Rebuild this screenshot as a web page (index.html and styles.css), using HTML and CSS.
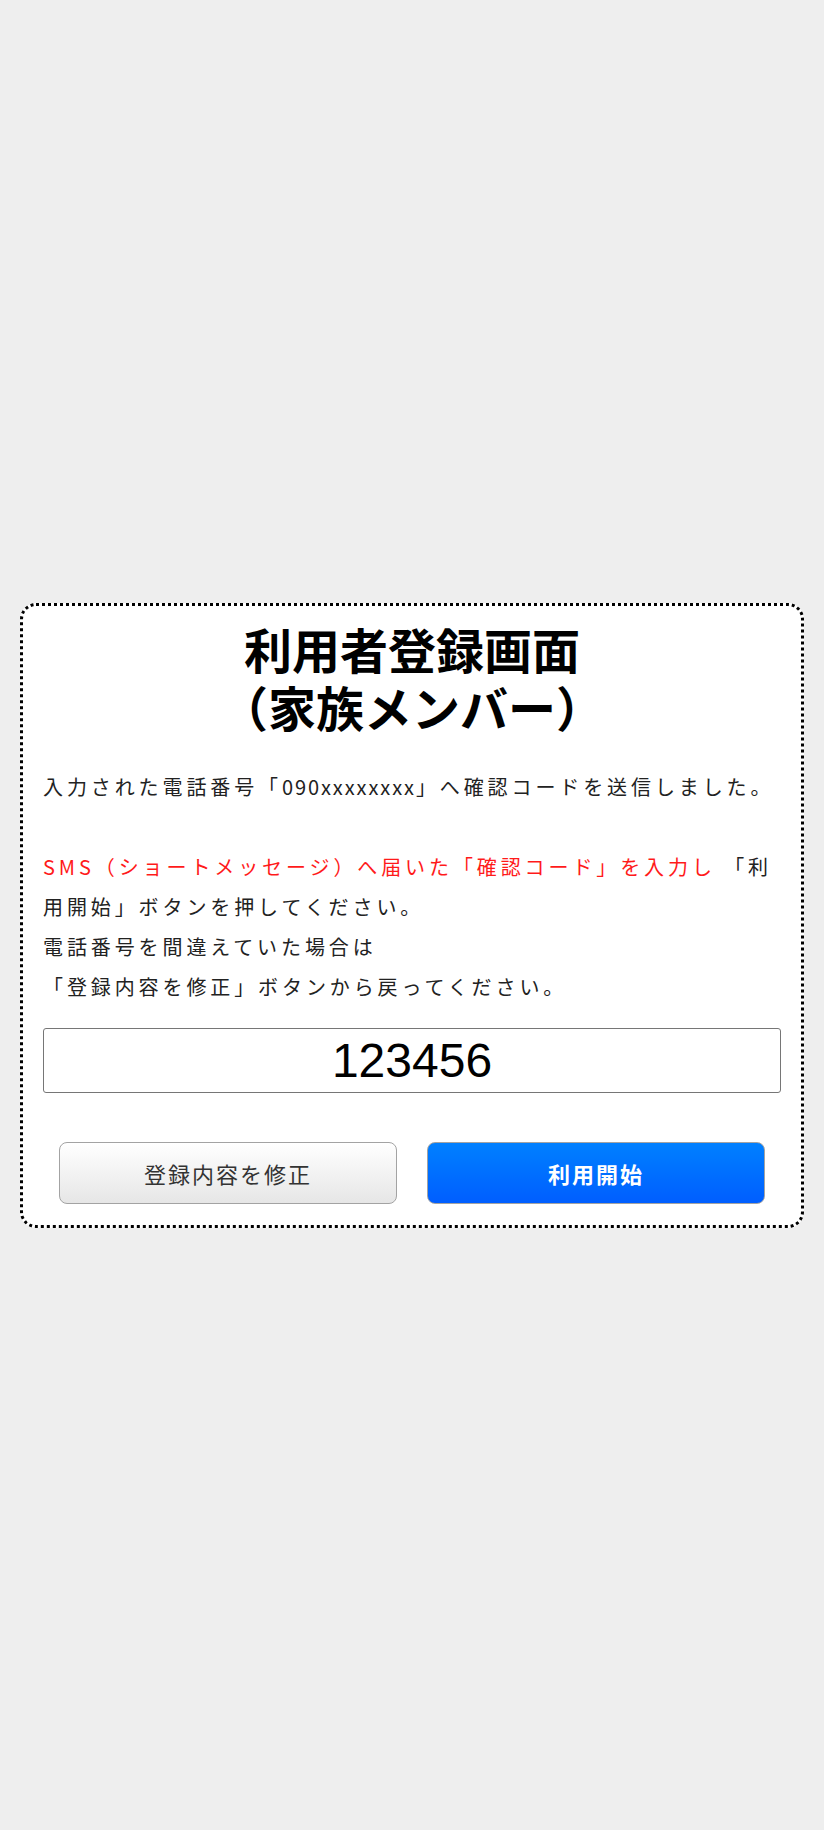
FILE: index.html
```html
<!DOCTYPE html>
<html lang="ja">
<head>
<meta charset="utf-8">
<title>利用者登録画面（家族メンバー）</title>
<link rel="stylesheet" href="styles.css">
</head>
<body>
<main class="card">
  <h1 class="title">利用者登録画面<br>（家族メンバー）</h1>
  <p class="msg">入力された電話番号「<span class="num">090xxxxxxxx</span>」へ確認コードを送信しました。<br><br><span class="alert">SMS（ショートメッセージ）へ届いた「確認コード」を入力し</span> 「利用開始」ボタンを押してください。<br>電話番号を間違えていた場合は<br>「登録内容を修正」ボタンから戻ってください。</p>
  <input class="code" type="text" value="123456">
  <div class="actions">
    <button class="btn btn-back" type="button">登録内容を修正</button>
    <button class="btn btn-start" type="button">利用開始</button>
  </div>
</main>
</body>
</html>
```
FILE: styles.css
```css
html, body {
  margin: 0;
  padding: 0;
}
body {
  background: #eeeeee;
  min-height: 1830px;
  display: flex;
  align-items: center;
  justify-content: center;
  padding: 0 20px;
  box-sizing: border-box;
  font-family: "Noto Sans CJK JP", "Noto Sans", sans-serif;
}
.card {
  width: 100%;
  box-sizing: border-box;
  background: #ffffff;
  border: 3px dotted #000000;
  border-radius: 16px;
  padding: 13px 20px 21px;
}
.title {
  margin: 0;
  font-size: 48px;
  line-height: 58px;
  font-weight: bold;
  text-align: center;
  color: #000000;
}
.msg {
  margin: 32px 0 0;
  font-size: 20px;
  line-height: 40px;
  letter-spacing: 3.9px;
  color: #222222;
}
.num {
  letter-spacing: 1.9px;
}
.alert {
  color: #ff1a1a;
}
.code {
  display: block;
  width: 100%;
  height: 65px;
  box-sizing: border-box;
  margin: 21px 0 0;
  border: 1px solid #767676;
  border-radius: 3px;
  padding: 0 8px;
  font-family: "Liberation Sans", Arial, sans-serif;
  font-size: 48px;
  color: #000000;
  text-align: center;
  background: #ffffff;
}
.actions {
  display: flex;
  gap: 30px;
  padding: 0 16px;
  margin-top: 49px;
}
.btn {
  flex: 1;
  height: 62px;
  border: 1px solid #a3a3a3;
  border-radius: 8px;
  font-family: "Noto Sans CJK JP", "Noto Sans", sans-serif;
  font-size: 22px;
  letter-spacing: 2px;
  cursor: pointer;
}
.btn-back {
  background: linear-gradient(#ffffff, #e6e6e6);
  color: #333333;
}
.btn-start {
  background: linear-gradient(#0080ff, #005eff);
  color: #ffffff;
  font-weight: bold;
}
```
